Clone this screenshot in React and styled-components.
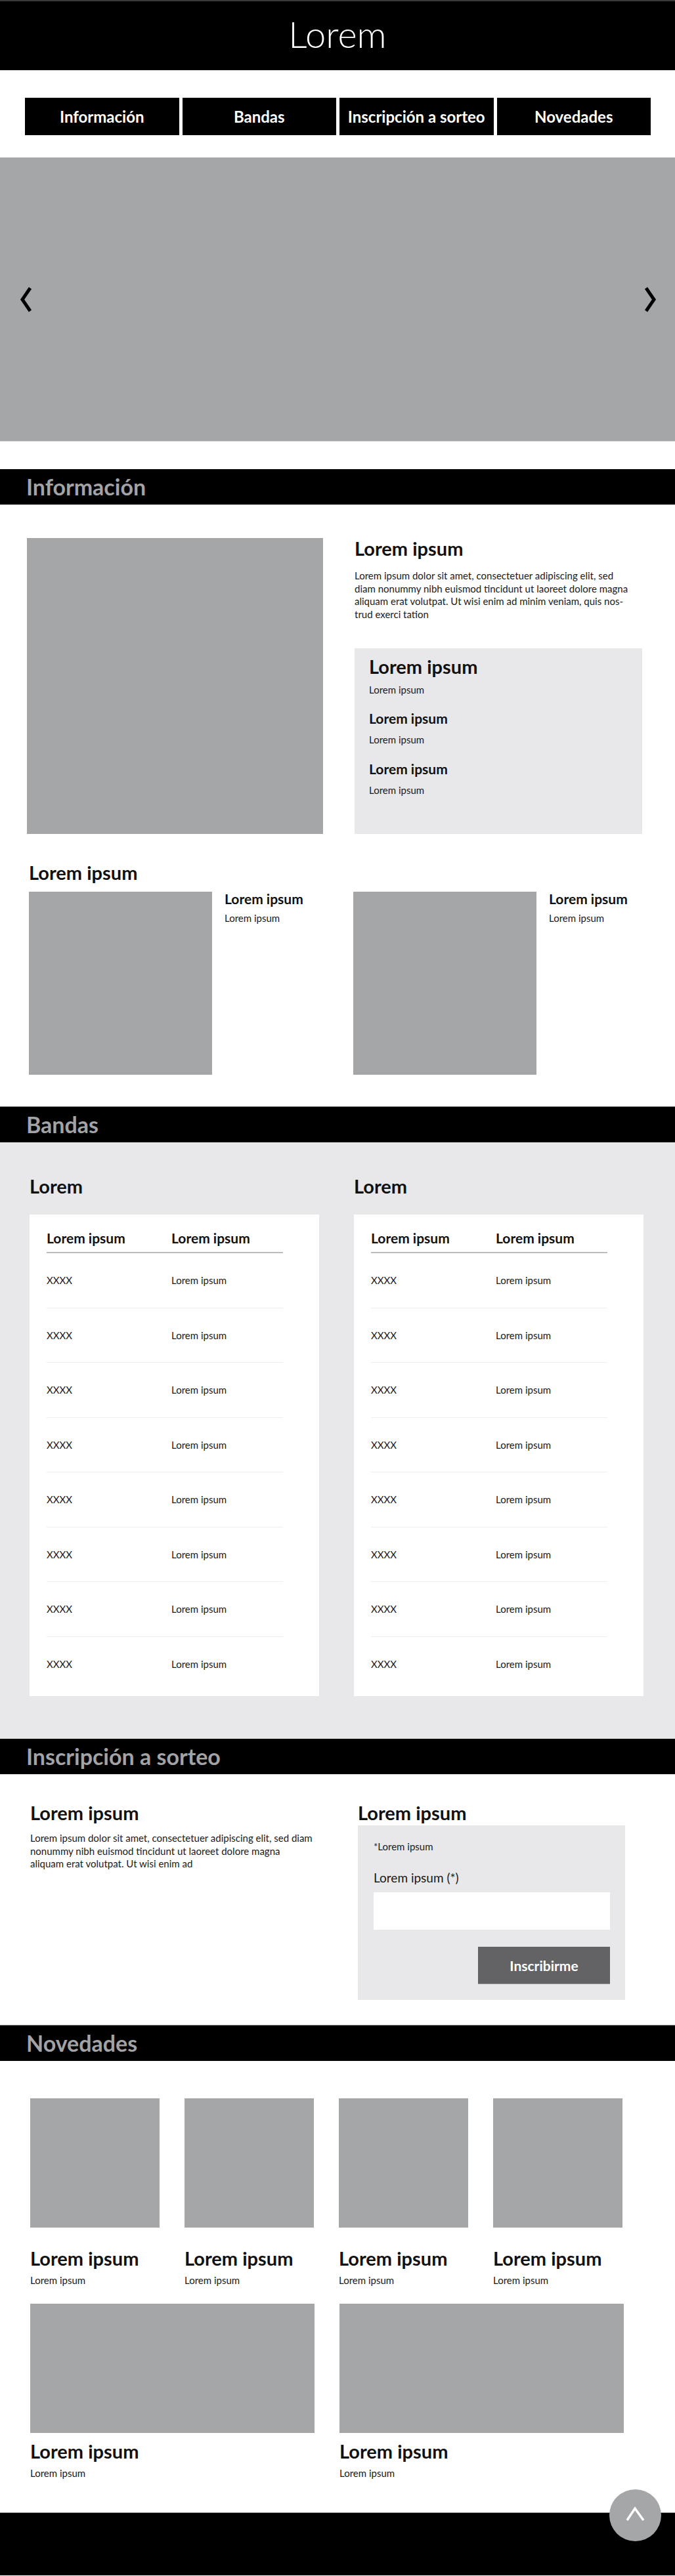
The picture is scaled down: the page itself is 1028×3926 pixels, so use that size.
import styled, { createGlobalStyle } from "styled-components";

const GlobalStyle = createGlobalStyle`
  * { box-sizing: border-box; }
  body {
    margin: 0;
    background: #fff;
    color: #111;
    font-family: Lato, "Open Sans", "Liberation Sans", sans-serif;
  }
  h1, h2, h3, h4, p { margin: 0; }
`;

const Page = styled.div`
  width: 1028px;
`;

const TopBar = styled.header`
  height: 107px;
  background: #000;
  border-top: 2px solid #3a3a3a;
  display: flex;
  align-items: center;
  justify-content: center;
`;

const Brand = styled.h1`
  color: #fff;
  font-size: 56px;
  font-weight: 300;
  line-height: 1;
  margin-bottom: 6px;
`;

const NavWrap = styled.nav`
  padding: 42px 37px 34px 38px;
`;

const NavGrid = styled.div`
  display: grid;
  grid-template-columns: repeat(4, 1fr);
  gap: 5px;
`;

const NavButton = styled.a`
  height: 57px;
  background: #000;
  color: #fff;
  font-size: 24px;
  font-weight: 700;
  display: flex;
  align-items: center;
  justify-content: center;
  text-decoration: none;
`;

const Slider = styled.div`
  height: 433px;
  background: #a5a6a8;
  border-bottom: 1px solid #d4d4d6;
  display: flex;
  align-items: center;
  justify-content: space-between;
  padding: 0 26px 0 28px;
  margin-bottom: 42px;
`;

const SlideArrow = styled.button`
  border: none;
  background: none;
  padding: 0;
  width: 23px;
  height: 39px;
  cursor: pointer;
`;

const SectionBar = styled.div`
  height: ${(p) => (p.$line ? 55 : 54)}px;
  background: #000;
  border-top: ${(p) => (p.$line ? "1px solid #8a8a8c" : "none")};
  display: flex;
  align-items: center;
  padding-left: 40px;
`;

const SectionTitle = styled.h2`
  color: #a3a3a5;
  font-size: 34px;
  font-weight: 700;
  line-height: 1;
`;

const Heading = styled.h3`
  font-size: 29px;
  font-weight: 700;
  line-height: 35px;
  margin-top: ${(p) => p.$mt || 0}px;
`;

const SubHeading = styled.h4`
  font-size: 21px;
  font-weight: 700;
  line-height: 25px;
  margin-top: ${(p) => p.$mt || 0}px;
`;

const Small = styled.p`
  font-size: 15px;
  line-height: 17px;
  color: #1a1a1a;
  margin-top: ${(p) => p.$mt || 0}px;
`;

const Paragraph = styled.p`
  font-size: 15px;
  line-height: 19.5px;
  color: #1a1a1a;
  white-space: nowrap;
  margin-top: ${(p) => p.$mt || 0}px;
`;

const Placeholder = styled.div`
  background: #a5a6a8;
  width: ${(p) => (p.$w ? `${p.$w}px` : "100%")};
  height: ${(p) => p.$h}px;
  flex-shrink: 0;
`;

/* Información */
const InfoSection = styled.section`
  padding: 51px 0 48px;
`;

const InfoTop = styled.div`
  display: grid;
  grid-template-columns: 451px 438px;
  column-gap: 48px;
  padding-left: 41px;
`;

const InfoAside = styled.div`
  display: flex;
  flex-direction: column;
`;

const InfoBox = styled.div`
  flex: 1;
  margin-top: 42px;
  background: #e8e8ea;
  padding: 10px 22px;
`;

const InfoBottom = styled.div`
  padding-left: 44px;
`;

const CardsGrid = styled.div`
  display: grid;
  grid-template-columns: 494px 1fr;
  margin-top: 12px;
`;

const SideCard = styled.div`
  display: flex;
  gap: 19px;
`;

const SideText = styled.div`
  margin-top: -2px;
`;

/* Bandas */
const BandSection = styled.section`
  background: #e8e8ea;
  padding: 49px 48px 65px 45px;
  display: grid;
  grid-template-columns: 441px 441px;
  column-gap: 53px;
`;

const TableCard = styled.div`
  background: #fff;
  margin-top: 26px;
  padding: 23px 0 7px 26px;
`;

const Table = styled.div`
  width: 360px;
`;

const HeadRow = styled.div`
  display: grid;
  grid-template-columns: 190px 1fr;
  padding-bottom: 9px;
  border-bottom: 2px solid #bcbcbe;
`;

const Row = styled.div`
  display: grid;
  grid-template-columns: 190px 1fr;
  align-items: center;
  height: 83.5px;
  border-bottom: 1px solid #eeeef0;
  font-size: 15px;
  color: #1a1a1a;

  &:last-child {
    border-bottom: none;
  }
`;

/* Inscripción */
const SignSection = styled.section`
  padding: 41px 0 38px 46px;
  display: grid;
  grid-template-columns: 499px 407px;
`;

const FormBox = styled.form`
  margin-top: 2px;
  background: #e8e8ea;
  padding: 24px 23px 24px 24px;
  display: flex;
  flex-direction: column;
`;

const FieldLabel = styled.label`
  font-size: 19px;
  line-height: 23px;
  color: #1a1a1a;
  margin-top: 27px;
`;

const TextField = styled.input`
  height: 57px;
  margin-top: 11px;
  border: none;
  background: #fff;
  outline: none;
`;

const SubmitButton = styled.button`
  align-self: flex-end;
  width: 201px;
  height: 57px;
  margin-top: 26px;
  border: none;
  border-bottom: 1px solid #8d8d8f;
  background: #636365;
  color: #fff;
  font-family: inherit;
  font-size: 21px;
  font-weight: 700;
`;

/* Novedades */
const NewsSection = styled.section`
  padding: 57px 0 51px 46px;
`;

const NewsGrid = styled.div`
  display: grid;
  grid-template-columns: repeat(${(p) => p.$cols}, ${(p) => p.$w}px);
  column-gap: 38px;
  margin-top: ${(p) => p.$mt || 0}px;
`;

const Footer = styled.footer`
  position: relative;
  height: 96px;
  background: #000;
  border-top: 1px solid #8a8a8c;
`;

const ToTop = styled.button`
  position: absolute;
  right: 21px;
  top: -36px;
  width: 79px;
  height: 79px;
  border-radius: 50%;
  border: none;
  padding: 0;
  background: #a5a6a8;
  cursor: pointer;
`;

const Chevron = ({ dir }) => (
  <svg width="23" height="39" viewBox="0 0 23 39">
    <polyline
      points={dir === "left" ? "18,2 6,19.5 18,37" : "5,2 17,19.5 5,37"}
      fill="none"
      stroke="#000"
      strokeWidth="5"
    />
  </svg>
);

const rows = Array.from({ length: 8 });

const BandTable = ({ title }) => (
  <div>
    <Heading>{title}</Heading>
    <TableCard>
      <Table>
        <HeadRow>
          <SubHeading>Lorem ipsum</SubHeading>
          <SubHeading>Lorem ipsum</SubHeading>
        </HeadRow>
        {rows.map((_, i) => (
          <Row key={i}>
            <span>XXXX</span>
            <span>Lorem ipsum</span>
          </Row>
        ))}
      </Table>
    </TableCard>
  </div>
);

const NewsCard = ({ w }) => (
  <div>
    <Placeholder $w={w} $h={197} />
    <Heading $mt={w > 300 ? 10 : 29}>Lorem ipsum</Heading>
    <Small $mt={8}>Lorem ipsum</Small>
  </div>
);

export default function App() {
  return (
    <Page>
      <GlobalStyle />
      <TopBar>
        <Brand>Lorem</Brand>
      </TopBar>

      <NavWrap>
        <NavGrid>
          <NavButton>Información</NavButton>
          <NavButton>Bandas</NavButton>
          <NavButton>Inscripción a sorteo</NavButton>
          <NavButton>Novedades</NavButton>
        </NavGrid>
      </NavWrap>

      <Slider>
        <SlideArrow aria-label="anterior">
          <Chevron dir="left" />
        </SlideArrow>
        <SlideArrow aria-label="siguiente">
          <Chevron dir="right" />
        </SlideArrow>
      </Slider>

      <SectionBar>
        <SectionTitle>Información</SectionTitle>
      </SectionBar>
      <InfoSection>
        <InfoTop>
          <Placeholder $h={451} />
          <InfoAside>
            <Heading $mt={-2}>Lorem ipsum</Heading>
            <Paragraph $mt={15}>
              Lorem ipsum dolor sit amet, consectetuer adipiscing elit, sed
              <br />
              diam nonummy nibh euismod tincidunt ut laoreet dolore magna
              <br />
              aliquam erat volutpat. Ut wisi enim ad minim veniam, quis nos-
              <br />
              trud exerci tation
            </Paragraph>
            <InfoBox>
              <Heading>Lorem ipsum</Heading>
              <Small $mt={10}>Lorem ipsum</Small>
              <SubHeading $mt={22}>Lorem ipsum</SubHeading>
              <Small $mt={12}>Lorem ipsum</Small>
              <SubHeading $mt={23}>Lorem ipsum</SubHeading>
              <Small $mt={12}>Lorem ipsum</Small>
            </InfoBox>
          </InfoAside>
        </InfoTop>
        <InfoBottom>
          <Heading $mt={41}>Lorem ipsum</Heading>
          <CardsGrid>
            {[0, 1].map((i) => (
              <SideCard key={i}>
                <Placeholder $w={279} $h={279} />
                <SideText>
                  <SubHeading>Lorem ipsum</SubHeading>
                  <Small $mt={9}>Lorem ipsum</Small>
                </SideText>
              </SideCard>
            ))}
          </CardsGrid>
        </InfoBottom>
      </InfoSection>

      <SectionBar $line>
        <SectionTitle>Bandas</SectionTitle>
      </SectionBar>
      <BandSection>
        <BandTable title="Lorem" />
        <BandTable title="Lorem" />
      </BandSection>

      <SectionBar>
        <SectionTitle>Inscripción a sorteo</SectionTitle>
      </SectionBar>
      <SignSection>
        <div>
          <Heading>Lorem ipsum</Heading>
          <Paragraph $mt={12}>
            Lorem ipsum dolor sit amet, consectetuer adipiscing elit, sed diam
            <br />
            nonummy nibh euismod tincidunt ut laoreet dolore magna
            <br />
            aliquam erat volutpat. Ut wisi enim ad
          </Paragraph>
        </div>
        <div>
          <Heading>Lorem ipsum</Heading>
          <FormBox onSubmit={(e) => e.preventDefault()}>
            <Small>*Lorem ipsum</Small>
            <FieldLabel htmlFor="nombre">Lorem ipsum (*)</FieldLabel>
            <TextField id="nombre" type="text" />
            <SubmitButton type="submit">Inscribirme</SubmitButton>
          </FormBox>
        </div>
      </SignSection>

      <SectionBar $line>
        <SectionTitle>Novedades</SectionTitle>
      </SectionBar>
      <NewsSection>
        <NewsGrid $cols={4} $w={197}>
          {[0, 1, 2, 3].map((i) => (
            <NewsCard key={i} w={197} />
          ))}
        </NewsGrid>
        <NewsGrid $cols={2} $w={433} $mt={27}>
          {[0, 1].map((i) => (
            <NewsCard key={i} w={433} />
          ))}
        </NewsGrid>
      </NewsSection>

      <Footer>
        <ToTop aria-label="subir">
          <svg width="79" height="79" viewBox="0 0 79 79">
            <polyline
              points="27,47 39,29 52,47"
              fill="none"
              stroke="#fff"
              strokeWidth="3.5"
            />
          </svg>
        </ToTop>
      </Footer>
    </Page>
  );
}
